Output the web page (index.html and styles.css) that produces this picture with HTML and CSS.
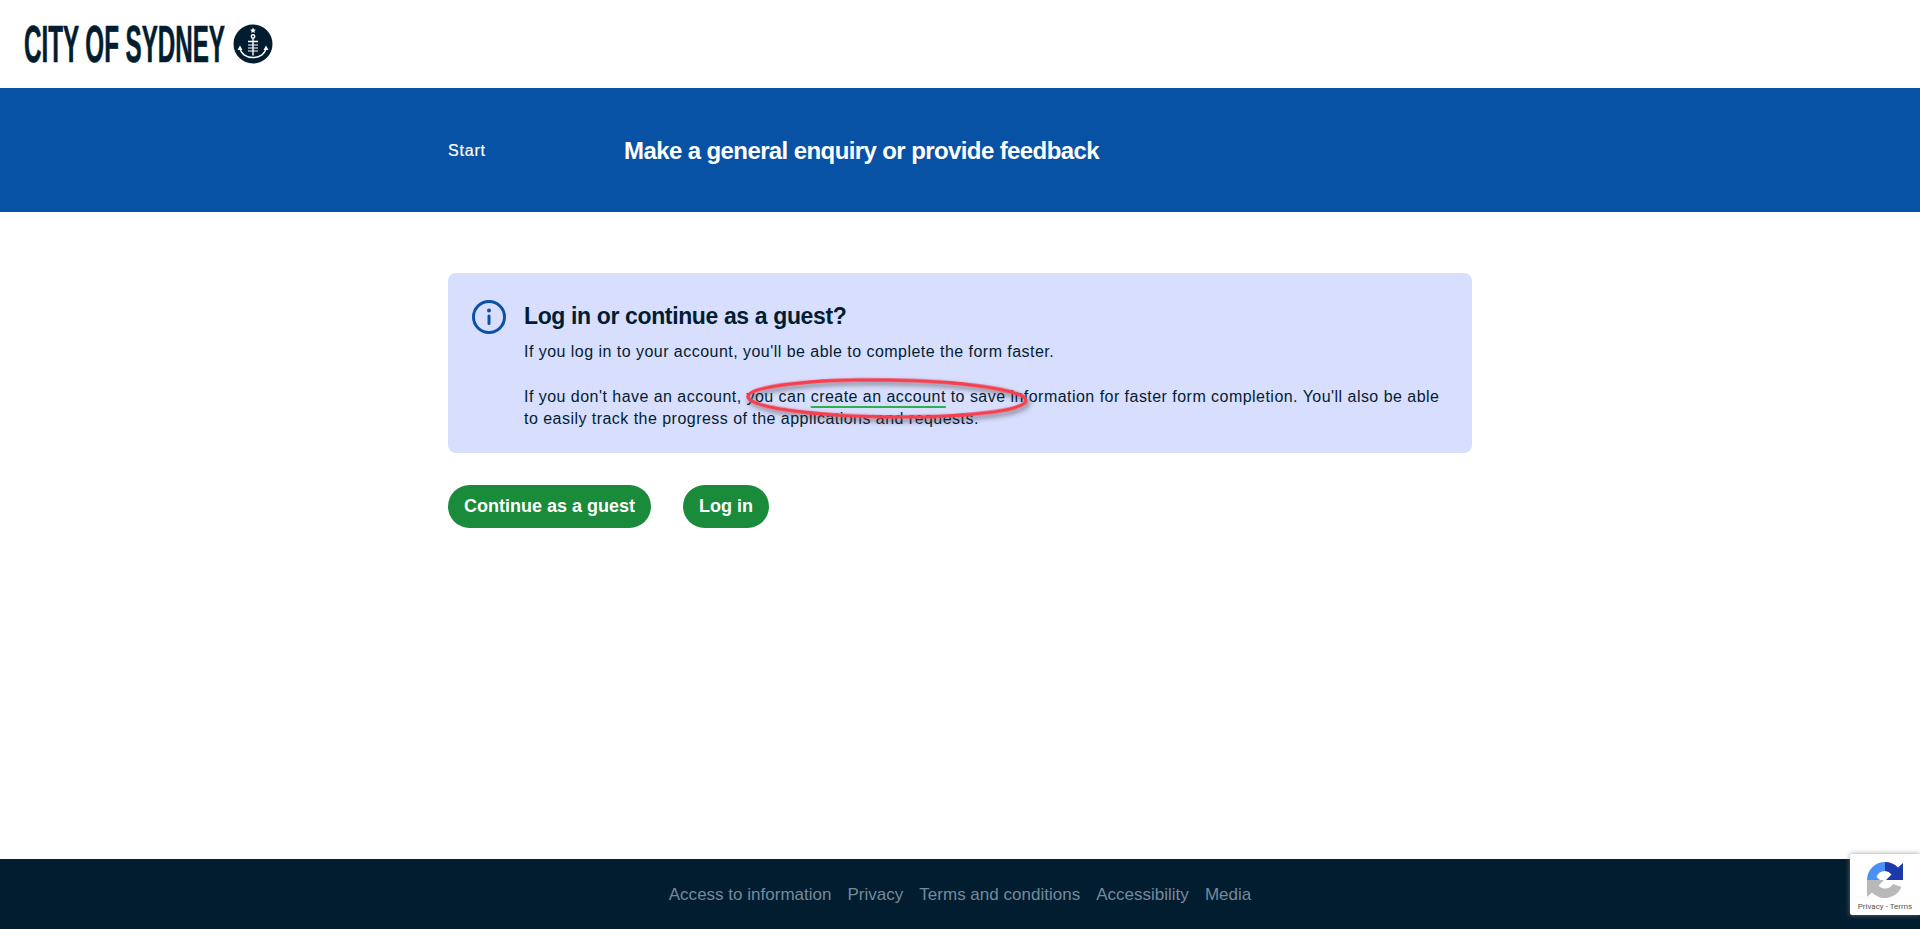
FILE: index.html
```html
<!DOCTYPE html>
<html lang="en">
<head>
<meta charset="utf-8">
<title>Make a general enquiry or provide feedback</title>
<link rel="stylesheet" href="styles.css">
</head>
<body>
<div class="page">
  <header class="site-header">
    <a class="logo" href="#" aria-label="City of Sydney">
      <svg class="logo-word" width="201" height="60" viewBox="0 0 433 60" preserveAspectRatio="none">
        <text class="logo-text" x="0" y="48.500" textLength="433" lengthAdjust="spacingAndGlyphs">CITY OF SYDNEY</text>
      </svg>
      <svg class="logo-mark" width="40" height="40" viewBox="0 0 40 40">
        <circle cx="20" cy="20" r="19.500" fill="#031d30"/>
        <path d="M20 3.500l.9 1.900 2 .3-1.500 1.400.4 2-1.800-1-1.800 1 .4-2-1.500-1.400 2-.3z" fill="#fff"/>
        <g fill="none" stroke="#fff" stroke-width="1.400">
          <circle cx="20" cy="12.500" r="1.700"/>
          <path d="M20 14.500v17M15 17.500h10M7 24c.5 5.500 6 9.500 13 9.500s12.500-4 13-9.500"/>
          <path d="M15 21h10M15 24h10M15 27h10" stroke-width="1.200"/>
        </g>
        <path d="M4.500 26l2.500-4.500 2.500 4.500zM30.500 26l2.500-4.500 2.500 4.500z" fill="#fff"/>
      </svg>
    </a>
  </header>

  <section class="banner">
    <div class="banner-inner">
      <span class="step">Start</span>
      <h1 class="banner-title">Make a general enquiry or provide feedback</h1>
    </div>
  </section>

  <main class="content">
    <div class="notice">
      <svg class="notice-icon" width="36" height="36" viewBox="0 0 36 36">
        <circle cx="18" cy="18" r="15.500" fill="none" stroke="#0a52a4" stroke-width="3"/>
        <circle cx="18" cy="11.500" r="2" fill="#0a52a4"/>
        <rect x="16.500" y="15.500" width="3" height="10.500" rx="1.500" fill="#0a52a4"/>
      </svg>
      <div class="notice-body">
        <h2 class="notice-title">Log in or continue as a guest?</h2>
        <p class="notice-text">If you log in to your account, you'll be able to complete the form faster.</p>
        <p class="notice-text">If you don't have an account, you can <a class="text-link" href="#">create an account</a> to save information for faster form completion. You'll also be able to easily track the progress of the applications and requests.</p>
      </div>
    </div>
    <div class="actions">
      <a class="btn" href="#">Continue as a guest</a>
      <a class="btn" href="#">Log in</a>
    </div>
  </main>

  <footer class="site-footer">
    <a href="#">Access to information</a>
    <a href="#">Privacy</a>
    <a href="#">Terms and conditions</a>
    <a href="#">Accessibility</a>
    <a href="#">Media</a>
  </footer>
</div>

<svg class="annotation" width="300" height="60" viewBox="0 0 300 60">
  <defs>
    <filter id="drop" x="-10%" y="-30%" width="120%" height="170%">
      <feDropShadow dx="2" dy="3" stdDeviation="2.500" flood-color="#333" flood-opacity=".6"/>
    </filter>
  </defs>
  <ellipse cx="150" cy="30.500" rx="139" ry="18.500" fill="none" stroke="#f6404f" stroke-width="3.500" filter="url(#drop)" transform="rotate(.8 150 30)"/>
</svg>

<aside class="recaptcha">
  <svg width="36" height="36" viewBox="0 0 36 36">
    <path d="M0 18A18 18 0 0 1 18 0V9A9 9 0 0 0 9.500 15L13 18Z" fill="#4a90f5"/>
    <path d="M18 0A18 18 0 0 1 31 5.500L36 1V18H19L24.500 12.500A9 9 0 0 0 18 9Z" fill="#1c3aa9"/>
    <path d="M0 18H17L11.500 23.500A9 9 0 0 0 26 22L34.500 25A18 18 0 0 1 5 30.500L0 35Z" fill="#b9b9b9"/>
  </svg>
  <span class="recaptcha-links">Privacy - Terms</span>
</aside>
</body>
</html>
```

FILE: styles.css
```css
* { box-sizing: border-box; }
html, body { margin: 0; padding: 0; }
body {
  font-family: "Liberation Sans", Arial, sans-serif;
  color: #031d30;
  background: #fff;
  position: relative;
}
.page { min-height: 929px; display: flex; flex-direction: column; }
a { color: inherit; text-decoration: none; }

.site-header { height: 88px; display: flex; align-items: center; padding-left: 24px; flex: none; }
.logo { display: flex; align-items: center; gap: 8px; height: 60px; }
.logo-word, .logo-mark { display: block; flex: none; }
.logo-text { font-family: "Liberation Sans", Arial, sans-serif; font-weight: 700; font-size: 52px; fill: #031d30; stroke: #031d30; stroke-width: .5px; vector-effect: non-scaling-stroke; }

.banner { background: #0852a5; height: 124px; flex: none; display: flex; align-items: center; justify-content: center; color: #fff; padding-top: 2px; }
.banner-inner { width: 1024px; display: flex; align-items: center; }
.step { width: 176px; font-size: 16px; letter-spacing: .8px; -webkit-text-stroke: .2px #fff; }
.banner-title { margin: 0; font-size: 24px; font-weight: 700; letter-spacing: -.6px; }

.content { flex: 1; width: 1024px; margin: 0 auto; padding-top: 61px; }
.notice { background: #d8defe; border-radius: 8px; height: 180px; padding: 26px 24px; display: flex; gap: 16px; }
.notice-icon { flex: none; margin-left: -1px; margin-right: 1px; }
.notice-title { margin: 1px 0 9px; font-size: 23px; line-height: 32px; font-weight: 700; letter-spacing: -.37px; }
.notice-text { margin: 0 0 23px; font-size: 16px; line-height: 22px; letter-spacing: .465px; }
.notice-text:last-child { margin-bottom: 0; }
.text-link { text-decoration: underline; text-decoration-color: #2db14b; text-decoration-thickness: 2px; text-underline-offset: 4px; }

.actions { display: flex; gap: 32px; margin-top: 32px; }
.btn { background: #1a8a3b; color: #fff; font-size: 18px; font-weight: 700; height: 43px; line-height: 43px; padding: 0 16px; border-radius: 22px; }

.site-footer { background: #031d30; height: 70px; flex: none; display: flex; align-items: center; justify-content: center; gap: 16px; font-size: 17px; letter-spacing: .01px; color: #748a9c; padding-top: 2px; }

.annotation { position: absolute; left: 737px; top: 368px; overflow: visible; }
.recaptcha { position: absolute; left: 1850px; top: 854px; width: 70px; height: 61px; background: #fff; border-radius: 2px 0 0 2px; box-shadow: 0 0 5px rgba(128,128,128,.8); display: flex; flex-direction: column; align-items: center; padding-top: 8px; }
.recaptcha svg { display: block; flex: none; }
.recaptcha-links { font-size: 8px; color: #555; margin-top: 4px; white-space: nowrap; font-family: Roboto, "Liberation Sans", sans-serif; }
```
